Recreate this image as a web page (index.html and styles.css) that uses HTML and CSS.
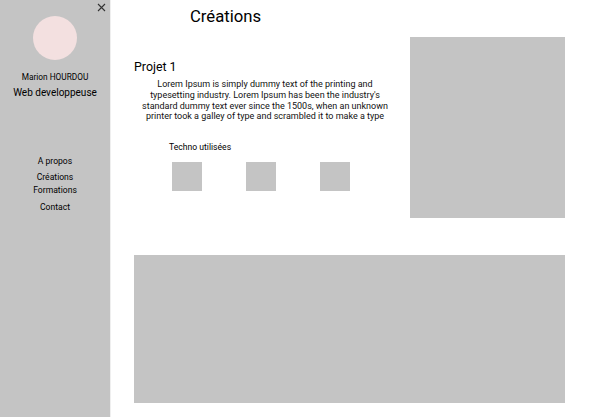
FILE: index.html
```html
<!DOCTYPE html>
<html lang="fr">
<head>
<meta charset="utf-8">
<title>Créations</title>
<link rel="stylesheet" href="styles.css">
</head>
<body>
<div class="page">
  <aside class="sidebar">
    <button class="close" aria-label="Fermer">
      <svg width="9" height="9" viewBox="0 0 9 9"><path d="M1 1L8 8M8 1L1 8" stroke="#333" stroke-width="1.1" fill="none"/></svg>
    </button>
    <div class="avatar"></div>
    <div class="name">Marion HOURDOU</div>
    <div class="role">Web developpeuse</div>
    <nav class="nav">
      <a class="nav-item">A propos</a>
      <a class="nav-item nav-item--g3">Créations</a>
      <a class="nav-item">Formations</a>
      <a class="nav-item nav-item--g4">Contact</a>
    </nav>
  </aside>
  <main class="main">
    <h1 class="title">Créations</h1>
    <section class="project">
      <div class="project-info">
        <h2 class="project-title">Projet 1</h2>
        <p class="project-text">Lorem Ipsum is simply dummy text of the printing and<br>typesetting industry. Lorem Ipsum has been the industry's<br>standard dummy text ever since the 1500s, when an unknown<br>printer took a galley of type and scrambled it to make a type</p>
        <div class="techno-label">Techno utilisées</div>
        <div class="techno-list">
          <div class="techno"></div>
          <div class="techno"></div>
          <div class="techno"></div>
        </div>
      </div>
      <div class="project-image"></div>
    </section>
    <div class="wide-image"></div>
  </main>
</div>
</body>
</html>
```

FILE: styles.css
```css
* { box-sizing: border-box; }
html, body { margin: 0; padding: 0; background: #fff; }
body { font-family: Roboto, "Liberation Sans", sans-serif; color: #000; }

.page { display: flex; height: 417px; width: 606px; overflow: hidden; }

.sidebar {
  width: 111px;
  flex: none;
  background: #c4c4c4;
  border-right: 1px solid #efefef;
  display: flex;
  flex-direction: column;
  align-items: center;
}
.close {
  align-self: flex-end;
  margin: 3px 4px 0 0;
  padding: 0;
  border: 0;
  background: none;
  width: 9px;
  height: 9px;
  line-height: 0;
}
.avatar {
  margin-top: 4px;
  width: 44px;
  height: 44px;
  border-radius: 50%;
  background: #f3e0e0;
  margin-right: 1px;
}
.name { margin-top: 11px; font-size: 8.3px; line-height: 12px; }
.role { margin-top: 3px; font-size: 10px; line-height: 14px; }
.nav { margin-top: 55px; display: flex; flex-direction: column; align-items: center; }
.nav-item { font-size: 8.6px; line-height: 13px; }
.nav-item--g3 { margin-top: 3px; }
.nav-item--g4 { margin-top: 4px; }

.main { flex: 1; padding-left: 23px; display: flex; flex-direction: column; }
.title {
  margin: 6px 0 0 56px;
  font-size: 16.7px;
  line-height: 22px;
  font-weight: 400;
}
.project { display: flex; margin-top: 9px; }
.project-info { width: 262px; display: flex; flex-direction: column; }
.project-title {
  margin: 22px 0 0 0;
  font-size: 12.4px;
  line-height: 16px;
  font-weight: 400;
}
.project-text {
  margin: 4.2px 0 0 0;
  font-size: 9px;
  line-height: 10.7px;
  text-align: center;
  color: #111;
}
.techno-label { margin: 19px 0 0 35px; font-size: 8.6px; line-height: 12px; }
.techno-list { display: flex; gap: 44px; margin: 9px 0 0 38px; }
.techno { width: 30px; height: 29px; background: #c4c4c4; }
.project-image { margin-left: 14px; width: 155px; height: 181px; background: #c4c4c4; }
.wide-image { margin-top: 37px; width: 431px; height: 148px; background: #c4c4c4; }
```
